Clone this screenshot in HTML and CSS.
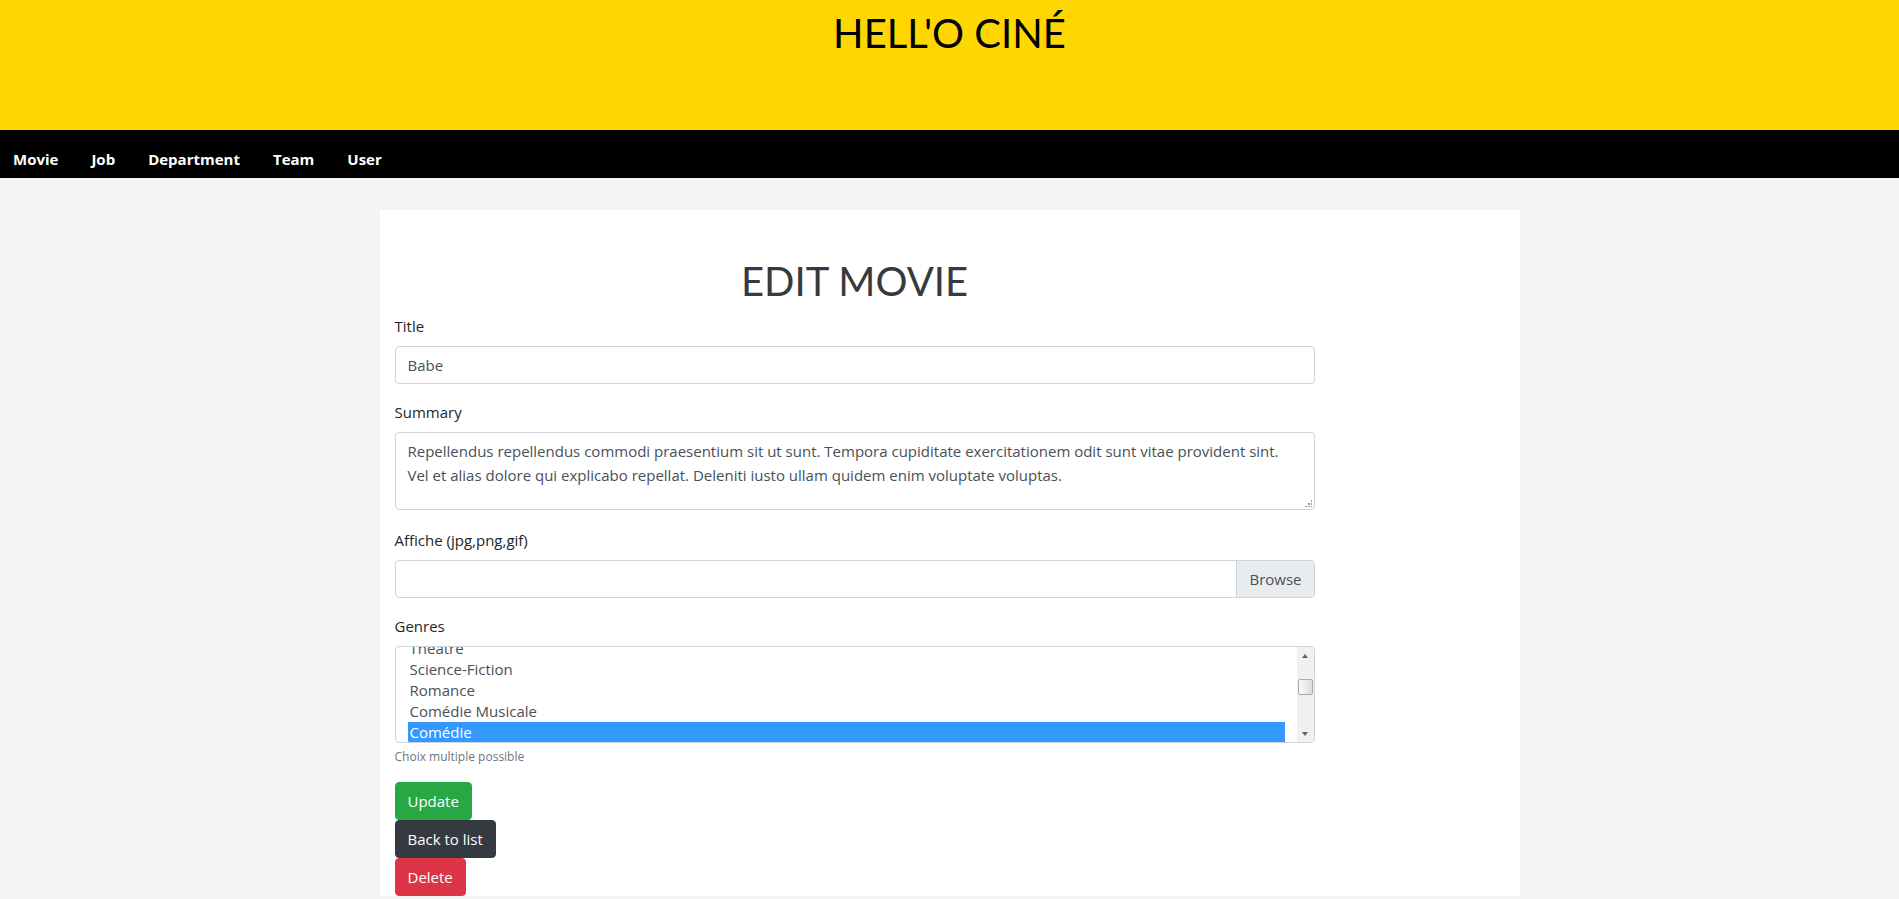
FILE: index.html
```
<!DOCTYPE html>
<html lang="fr">
<head>
<meta charset="utf-8">
<title>Edit movie - Hell'o Ciné</title>
<link rel="stylesheet" href="styles.css">
</head>
<body>
<header class="site-header">
  <h1 class="brand">HELL'O CINÉ</h1>
</header>
<nav class="main-nav">
  <a href="#" class="nav-link">Movie</a>
  <a href="#" class="nav-link">Job</a>
  <a href="#" class="nav-link">Department</a>
  <a href="#" class="nav-link">Team</a>
  <a href="#" class="nav-link">User</a>
</nav>
<main class="page">
  <div class="card">
    <div class="col">
      <h2 class="page-title">EDIT MOVIE</h2>
      <form class="movie-form">
        <div class="form-group">
          <label class="form-label" for="title">Title</label>
          <input class="form-control" id="title" type="text" value="Babe">
        </div>
        <div class="form-group group-summary">
          <label class="form-label" for="summary">Summary</label>
          <div class="textarea-wrap">
            <textarea class="form-control textarea" id="summary">Repellendus repellendus commodi praesentium sit ut sunt. Tempora cupiditate exercitationem odit sunt vitae provident sint. Vel et alias dolore qui explicabo repellat. Deleniti iusto ullam quidem enim voluptate voluptas.</textarea>
          </div>
        </div>
        <div class="form-group group-file">
          <label class="form-label">Affiche (jpg,png,gif)</label>
          <div class="file-field">
            <span class="file-name"></span>
            <span class="file-browse">Browse</span>
          </div>
        </div>
        <div class="form-group">
          <label class="form-label">Genres</label>
          <div class="multi-select">
            <div class="options">
              <ul class="option-list">
                <li class="option">Théâtre</li>
                <li class="option">Science-Fiction</li>
                <li class="option">Romance</li>
                <li class="option">Comédie Musicale</li>
                <li class="option selected">Comédie</li>
              </ul>
            </div>
            <div class="vscroll">
              <div class="vs-btn"><span class="arrow-up"></span></div>
              <div class="vs-track"><div class="vs-thumb"></div></div>
              <div class="vs-btn"><span class="arrow-down"></span></div>
            </div>
          </div>
          <small class="form-text">Choix multiple possible</small>
        </div>
      </form>
      <div class="actions">
        <button class="btn btn-success" type="button">Update</button>
        <button class="btn btn-dark" type="button">Back to list</button>
        <button class="btn btn-danger" type="button">Delete</button>
      </div>
    </div>
  </div>
</main>
</body>
</html>
```
FILE: styles.css
```
* { box-sizing: border-box; }

html, body {
  margin: 0;
  padding: 0;
}

body {
  background: #f4f4f4;
  font-family: "Open Sans", "Noto Sans", sans-serif;
  font-size: 15px;
  line-height: 24px;
  color: #212529;
}

/* Header */
.site-header {
  background: #ffd700;
  height: 130px;
  padding-top: 9px;
}

.brand {
  margin: 0;
  text-align: center;
  font-family: "Lato", sans-serif;
  font-weight: 400;
  font-size: 40px;
  line-height: 48px;
  color: #000;
}

/* Nav */
.main-nav {
  background: #000;
  height: 48px;
  padding: 17px 0 0 13px;
  display: flex;
  gap: 33px;
}

.nav-link {
  color: #fff;
  font-weight: 700;
  font-size: 15px;
  line-height: 24px;
  text-decoration: none;
}

/* Page */
.page {
  padding-top: 32px;
}

.card {
  width: 1140px;
  margin: 0 auto;
  background: #fff;
  padding-top: 47px;
}

.col {
  width: 950px;
  padding: 0 15px;
}

.page-title {
  margin: 0 0 9px;
  text-align: center;
  font-family: "Lato", sans-serif;
  font-weight: 400;
  font-size: 40px;
  line-height: 48px;
  color: #343a40;
}

.movie-form {
  margin: 0;
}

.form-group {
  margin-bottom: 16px;
}

.group-summary {
  margin-bottom: 18px;
}

.form-label {
  display: block;
  margin-bottom: 8px;
}

.form-control {
  display: block;
  width: 100%;
  height: 38px;
  margin: 0;
  padding: 6px 12px;
  font-family: "Open Sans", "Noto Sans", sans-serif;
  font-size: 15px;
  line-height: 24px;
  color: #495057;
  background: #fff;
  border: 1px solid #ced4da;
  border-radius: 4px;
  outline: none;
}

.textarea-wrap {
  position: relative;
}

.textarea-wrap::after {
  content: "";
  position: absolute;
  right: 3px;
  bottom: 3px;
  width: 7px;
  height: 7px;
  background:
    radial-gradient(circle, #9a9a9a 0.8px, transparent 1px) 6px 0 / 2px 2px no-repeat,
    radial-gradient(circle, #9a9a9a 0.8px, transparent 1px) 3px 3px / 2px 2px no-repeat,
    radial-gradient(circle, #9a9a9a 0.8px, transparent 1px) 6px 3px / 2px 2px no-repeat,
    radial-gradient(circle, #9a9a9a 0.8px, transparent 1px) 0 6px / 2px 2px no-repeat,
    radial-gradient(circle, #9a9a9a 0.8px, transparent 1px) 3px 6px / 2px 2px no-repeat,
    radial-gradient(circle, #9a9a9a 0.8px, transparent 1px) 6px 6px / 2px 2px no-repeat;
  pointer-events: none;
}

.textarea {
  height: 78px;
  resize: none;
  overflow: hidden;
}

/* File input */
.file-field {
  display: flex;
  height: 38px;
  border: 1px solid #ced4da;
  border-radius: 4px;
  overflow: hidden;
}

.file-name {
  flex: 1;
}

.file-browse {
  padding: 0 12px;
  line-height: 36px;
  background: #e9ecef;
  border-left: 1px solid #ced4da;
  color: #495057;
}

/* Multi select */
.multi-select {
  display: flex;
  height: 97px;
  border: 1px solid #ced4da;
  border-radius: 4px;
  overflow: hidden;
  background: #fff;
}

.options {
  flex: 1;
  overflow: hidden;
  padding: 0 12px;
}

.option-list {
  list-style: none;
  margin: -9px 0 0;
  padding: 0;
}

.option {
  height: 21px;
  line-height: 21px;
  padding-left: 2px;
  color: #495057;
  white-space: nowrap;
}

.option.selected {
  background: #3399ff;
  color: #fff;
}

.vscroll {
  width: 17px;
  display: flex;
  flex-direction: column;
  background: #f0f0f0;
}

.vs-btn {
  height: 17px;
  display: flex;
  align-items: center;
  justify-content: center;
}

.arrow-up {
  width: 0;
  height: 0;
  border-left: 3.5px solid transparent;
  border-right: 3.5px solid transparent;
  border-bottom: 4px solid #606060;
}

.arrow-down {
  width: 0;
  height: 0;
  border-left: 3.5px solid transparent;
  border-right: 3.5px solid transparent;
  border-top: 4px solid #606060;
}

.vs-track {
  flex: 1;
  padding-top: 15px;
  display: flex;
  justify-content: center;
}

.vs-thumb {
  width: 15px;
  height: 16px;
  border: 1px solid #a9a9a9;
  border-radius: 2px;
  background: linear-gradient(to right, #fafafa, #dcdcdc);
}

.form-text {
  display: block;
  margin-top: 4px;
  font-size: 12px;
  line-height: 19px;
  color: #6c757d;
}

/* Buttons */
.actions {
  display: flex;
  flex-direction: column;
  align-items: flex-start;
}

.btn {
  display: inline-block;
  margin: 0;
  padding: 6px 12px;
  font-family: "Open Sans", "Noto Sans", sans-serif;
  font-size: 15px;
  line-height: 24px;
  color: #fff;
  border: 1px solid transparent;
  border-radius: 4px;
  cursor: pointer;
}

.btn-success {
  background: #28a745;
  border-color: #28a745;
}

.btn-dark {
  background: #343a40;
  border-color: #343a40;
}

.btn-danger {
  background: #dc3545;
  border-color: #dc3545;
}
```
